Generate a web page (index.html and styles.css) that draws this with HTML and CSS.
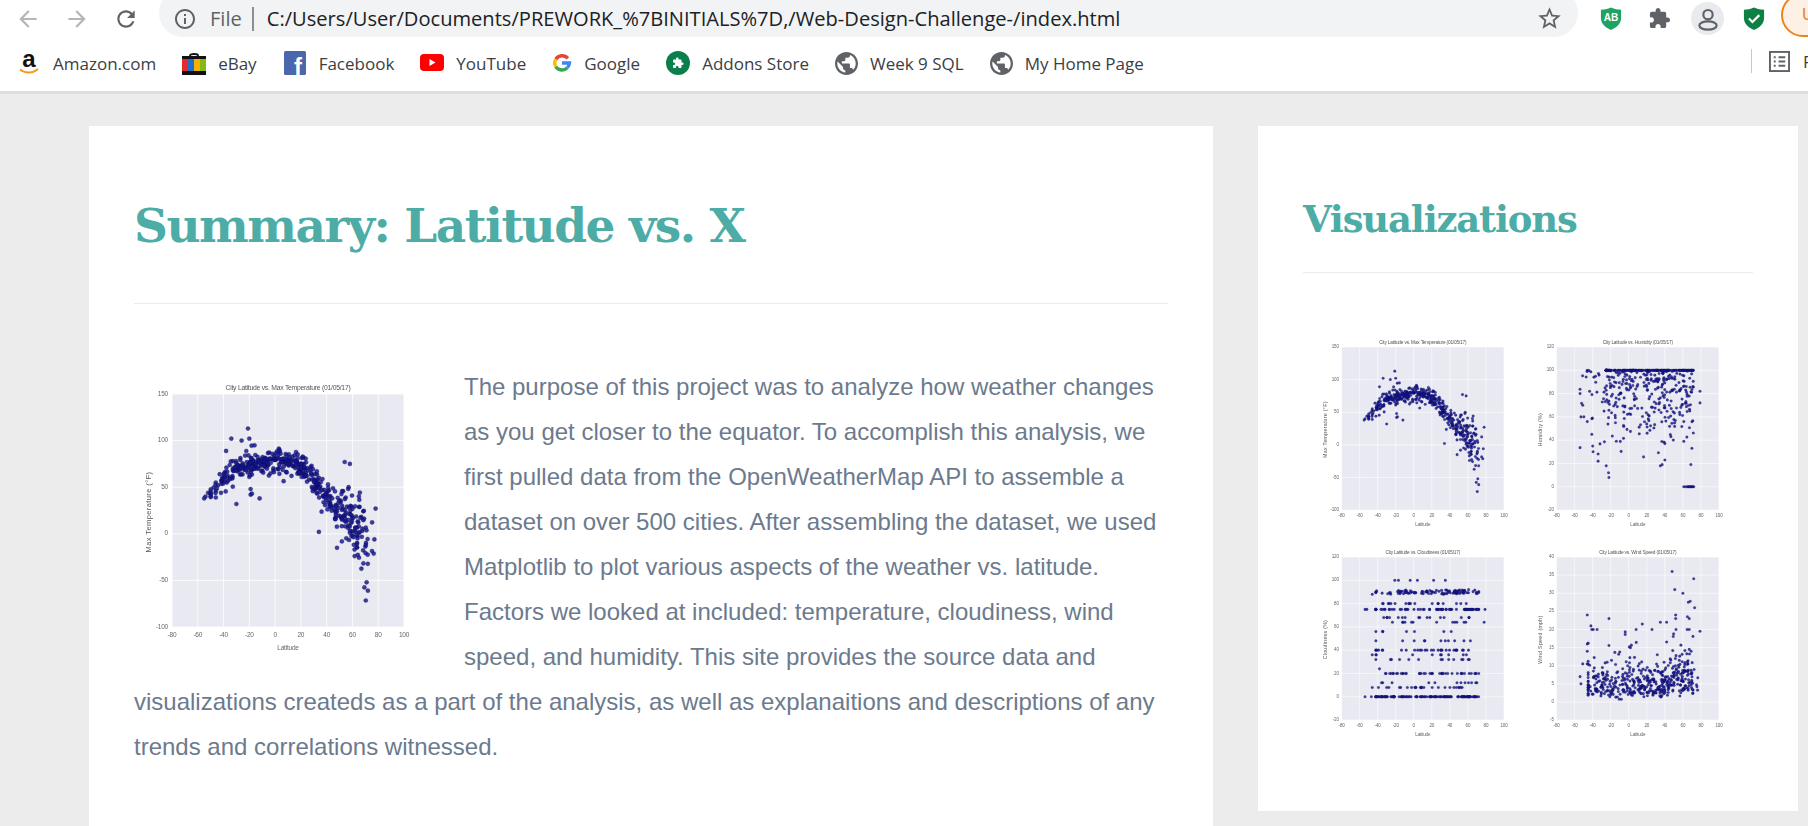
FILE: index.html
```html
<!DOCTYPE html>
<html lang="en">
<head>
<meta charset="utf-8">
<title>Summary: Latitude vs. X</title>
<link rel="stylesheet" href="styles.css">
</head>
<body>
<header class="chrome">
  <div class="toolbar">
    <svg class="nav nav-dim" viewBox="0 0 24 24"><path d="M20 11H7.83l5.59-5.59L12 4l-8 8 8 8 1.41-1.41L7.83 13H20v-2z"/></svg>
    <svg class="nav nav-dim" viewBox="0 0 24 24"><path d="M4 11h12.17l-5.59-5.59L12 4l8 8-8 8-1.41-1.41L16.17 13H4v-2z"/></svg>
    <svg class="nav" viewBox="0 0 24 24"><path d="M17.65 6.35C16.2 4.9 14.21 4 12 4c-4.42 0-7.99 3.58-7.99 8s3.57 8 7.99 8c3.73 0 6.84-2.55 7.73-6h-2.08c-.82 2.33-3.04 4-5.65 4-3.31 0-6-2.69-6-6s2.69-6 6-6c1.66 0 3.14.69 4.22 1.78L13 11h7V4l-2.35 2.35z"/></svg>
    <div class="omnibox">
      <svg class="info" viewBox="0 0 24 24"><path d="M11 7h2v2h-2zm0 4h2v6h-2zm1-9C6.48 2 2 6.48 2 12s4.48 10 10 10 10-4.48 10-10S17.52 2 12 2zm0 18c-4.41 0-8-3.59-8-8s3.59-8 8-8 8 3.59 8 8-3.59 8-8 8z"/></svg>
      <span class="scheme">File</span>
      <span class="url">C:/Users/User/Documents/PREWORK_%7BINITIALS%7D,/Web-Design-Challenge-/index.html</span>
      <svg class="star" viewBox="0 0 24 24"><path d="M22 9.24l-7.19-.62L12 2 9.19 8.63 2 9.24l5.46 4.73L5.82 21 12 17.27 18.18 21l-1.63-7.03L22 9.24zM12 15.4l-3.76 2.27 1-4.28-3.32-2.88 4.38-.38L12 6.1l1.71 4.04 4.38.38-3.32 2.88 1 4.28L12 15.4z"/></svg>
    </div>
    <div class="extensions">
      <svg class="ext" viewBox="0 0 24 26"><path fill="#1ea362" d="M12 1c4 2 7 2.4 11 2.400v9C23 18.500 18 23 12 25.500 6 23 1 18.500 1 12.400v-9C5 3.400 8 3 12 1z"/><text class="ab" x="12" y="15.500" text-anchor="middle">AB</text></svg>
      <svg class="ext puzzle" viewBox="0 0 24 24"><path d="M20.500 11H19V7c0-1.100-.9-2-2-2h-4V3.500C13 2.120 11.880 1 10.500 1S8 2.120 8 3.500V5H4c-1.100 0-1.990.9-1.990 2v3.800H3.500c1.490 0 2.700 1.210 2.700 2.700s-1.210 2.700-2.700 2.700H2V20c0 1.100.9 2 2 2h3.800v-1.500c0-1.490 1.210-2.700 2.700-2.700 1.490 0 2.700 1.210 2.700 2.700V22H17c1.100 0 2-.9 2-2v-4h1.500c1.380 0 2.500-1.120 2.500-2.500S21.880 11 20.500 11z"/></svg>
      <span class="avatar"><svg viewBox="0 0 24 24"><circle cx="12" cy="8" r="4.300"/><ellipse cx="12" cy="18" rx="8" ry="3.800"/></svg></span>
      <svg class="ext ext-safe" viewBox="0 0 24 26"><path fill="#0d8043" d="M12 1c4 2 7 2.400 11 2.400v9C23 18.500 18 23 12 25.500 6 23 1 18.500 1 12.400v-9C5 3.400 8 3 12 1z"/><path fill="none" stroke="#fff" stroke-width="2.400" d="M6.500 13l3.800 3.800 7.500-7.500"/></svg>
      <span class="update">U</span>
    </div>
  </div>
  <nav class="bookmarks">
    <a class="mark"><svg class="mark-icon" viewBox="0 0 24 24"><text class="amz" x="12" y="16" text-anchor="middle">a</text><path fill="none" stroke="#f59a1c" stroke-width="2" d="M3 18.500c5 4 13 4 18-.5"/></svg>Amazon.com</a>
    <a class="mark"><svg class="mark-icon" viewBox="0 0 24 24"><path fill="none" stroke="#111" stroke-width="1.800" d="M8 7V4.500C8 2.500 16 2.500 16 4.500V7"/><rect y="5" width="24" height="19" fill="#111"/><rect y="8" width="6" height="12" fill="#e52a2a"/><rect x="6" y="8" width="6" height="12" fill="#1e6fd0"/><rect x="12" y="8" width="6" height="12" fill="#f5b000"/><rect x="18" y="8" width="6" height="12" fill="#84b817"/></svg>eBay</a>
    <a class="mark"><svg class="mark-icon" viewBox="0 0 24 24"><rect x="1" width="22" height="24" rx="1.500" fill="#4a66ac"/><text class="fb" x="15" y="24" text-anchor="middle">f</text></svg>Facebook</a>
    <a class="mark"><svg class="mark-icon" viewBox="0 0 24 24"><rect y="3" width="24" height="17" rx="4" fill="#f00"/><path fill="#fff" d="M9.500 8v7l6-3.500z"/></svg>YouTube</a>
    <a class="mark"><svg class="mark-icon mark-g" viewBox="0 0 24 24"><g fill="none" stroke-width="4"><path stroke="#ea4335" d="M19 6.500A9 9 0 0 0 4.500 7.500"/><path stroke="#fbbc05" d="M4.500 7.500a9 9 0 0 0 0 9"/><path stroke="#34a853" d="M4.500 16.500a9 9 0 0 0 14 1"/><path stroke="#4285f4" d="M18.500 17.500A9 9 0 0 0 21 12H12"/></g></svg>Google</a>
    <a class="mark"><svg class="mark-icon" viewBox="0 0 24 24"><circle cx="12" cy="12" r="12" fill="#0b7f4b"/><path fill="#fff" transform="translate(6 6) scale(.5)" d="M20.500 11H19V7c0-1.100-.9-2-2-2h-4V3.500C13 2.120 11.880 1 10.500 1S8 2.120 8 3.500V5H4c-1.100 0-1.990.9-1.990 2v3.800H3.500c1.490 0 2.700 1.210 2.700 2.700s-1.210 2.700-2.700 2.700H2V20c0 1.100.9 2 2 2h3.800v-1.500c0-1.490 1.210-2.700 2.700-2.700 1.490 0 2.700 1.210 2.700 2.700V22H17c1.100 0 2-.9 2-2v-4h1.500c1.380 0 2.500-1.120 2.500-2.500S21.880 11 20.500 11z"/></svg>Addons Store</a>
    <a class="mark"><svg class="mark-icon globe" viewBox="2 2 20 20"><path d="M12 2C6.480 2 2 6.480 2 12s4.480 10 10 10 10-4.480 10-10S17.520 2 12 2zm-1 17.930c-3.950-.49-7-3.850-7-7.930 0-.62.08-1.210.21-1.790L9 15v1c0 1.100.9 2 2 2v1.930zm6.900-2.540c-.26-.81-1-1.390-1.900-1.390h-1v-3c0-.55-.45-1-1-1H8v-2h2c.55 0 1-.45 1-1V7h2c1.100 0 2-.9 2-2v-.41c2.930 1.190 5 4.060 5 7.410 0 2.080-.8 3.970-2.100 5.390z"/></svg>Week 9 SQL</a>
    <a class="mark"><svg class="mark-icon globe" viewBox="2 2 20 20"><path d="M12 2C6.480 2 2 6.480 2 12s4.480 10 10 10 10-4.480 10-10S17.520 2 12 2zm-1 17.930c-3.950-.49-7-3.850-7-7.930 0-.62.08-1.210.21-1.790L9 15v1c0 1.100.9 2 2 2v1.930zm6.900-2.540c-.26-.81-1-1.390-1.900-1.390h-1v-3c0-.55-.45-1-1-1H8v-2h2c.55 0 1-.45 1-1V7h2c1.100 0 2-.9 2-2v-.41c2.930 1.190 5 4.060 5 7.410 0 2.080-.8 3.970-2.100 5.390z"/></svg>My Home Page</a>
    <div class="reading">
      <svg class="list-icon" viewBox="0 0 22 22"><rect x="1" y="1" width="20" height="20" fill="none" stroke="#5f6368" stroke-width="2"/><path stroke="#5f6368" stroke-width="2" d="M5 6.500h2m3 0h7M5 11h2m3 0h7M5 15.500h2m3 0h7"/></svg>
      <span class="reading-label">Reading list</span>
    </div>
  </nav>
</header>
<div class="page">
  <main class="card card-main">
    <h1 class="title-main">Summary: Latitude vs. X</h1>
    <hr class="rule rule-main">
    <div class="article">
      <svg class="chart chart-large" data-kind="temp" viewBox="0 0 300 300"></svg>
      <p class="copy">The purpose of this project was to analyze how weather changes as you get closer to the equator. To accomplish this analysis, we first pulled data from the OpenWeatherMap API to assemble a dataset on over 500 cities. After assembling the dataset, we used Matplotlib to plot various aspects of the weather vs. latitude. Factors we looked at included: temperature, cloudiness, wind speed, and humidity. This site provides the source data and visualizations createds as a part of the analysis, as well as explanaitions and descriptions of any trends and correlations witnessed.</p>
    </div>
  </main>
  <aside class="card card-side">
    <h2 class="title-side">Visualizations</h2>
    <hr class="rule rule-side">
    <div class="gallery">
      <svg class="chart" data-kind="temp" viewBox="0 0 300 300"></svg>
      <svg class="chart" data-kind="humidity" viewBox="0 0 300 300"></svg>
      <svg class="chart" data-kind="cloud" viewBox="0 0 300 300"></svg>
      <svg class="chart" data-kind="wind" viewBox="0 0 300 300"></svg>
    </div>
  </aside>
</div>
<script src="chart.js"></script>
</body>
</html>
```
FILE: styles.css
```css
* { box-sizing: border-box; }
html, body { margin: 0; height: 826px; overflow: hidden; }
body { background: #ececec; font-family: "Liberation Sans", Arial, sans-serif; }

.chrome { background: #fff; height: 94px; border-bottom: 3px solid #dedede; overflow: hidden; }
.toolbar { height: 37px; display: flex; align-items: flex-end; position: relative; }
.nav { width: 26px; height: 26px; fill: #5f6368; margin: 0 0 5px 15px; flex: none; }
.nav:first-child { margin-left: 15px; }
.nav + .nav { margin-left: 23px; }
.nav-dim { fill: #b4b6b9; }
.omnibox { width: 1419px; height: 48px; margin-left: 20px; flex: none; border-radius: 24px; background: #f1f3f4; display: flex; align-items: center; padding: 11px 0 0 14px; color: #202124; font-family: "Open Sans", sans-serif; font-size: 20.100px; }
.info { width: 24px; height: 24px; fill: #5f6368; flex: none; }
.scheme { color: #5f6368; margin-left: 13px; padding-right: 10px; border-right: 2px solid #8d9093; line-height: 24px; }
.url { margin-left: 13px; white-space: nowrap; }
.star { width: 27px; height: 27px; fill: #5f6368; margin-left: auto; margin-right: 15px; flex: none; }
.extensions { display: flex; align-items: center; height: 37px; margin-left: 0; flex: none; }
.ext { width: 22px; height: 25px; flex: none; margin-left: 22px; }
.ext-safe { margin-left: 19px; }
.puzzle { fill: #5f6368; margin-left: 26px; width: 23px; }
.ab { font: bold 11px "Liberation Sans", sans-serif; fill: #fff; }
.avatar { width: 33px; height: 33px; border-radius: 50%; background: #e8eaed; margin-left: 20px; display: flex; align-items: center; justify-content: center; }
.avatar svg { width: 26px; height: 26px; fill: none; stroke: #5f6368; stroke-width: 2; }
.update { margin-left: 16px; width: 70px; height: 44px; margin-top: -8px; border: 2px solid #e8851c; background: #fdf1e6; border-radius: 22px; color: #e8851c; font-size: 17px; padding: 10px 0 0 19px; flex: none; }

.bookmarks { height: 54px; display: flex; align-items: center; padding: 0 0 2px 17px; gap: 26px; position: relative; font-family: "Open Sans", sans-serif; font-size: 17px; color: #3c4043; }
.mark { display: flex; align-items: center; gap: 12px; white-space: nowrap; }
.mark-icon { width: 24px; height: 24px; flex: none; overflow: visible; }
.mark-g { width: 20px; }
.globe { fill: #5f6368; width: 23px; height: 23px; }
.amz { font: bold 24px "Liberation Sans", sans-serif; fill: #111; }
.fb { font: bold 24px "Liberation Sans", sans-serif; fill: #fff; }
.reading { position: absolute; left: 1751px; top: 12px; height: 24px; display: flex; align-items: center; border-left: 1px solid #c8c8c8; padding-left: 17px; gap: 13px; white-space: nowrap; }
.list-icon { width: 21px; height: 21px; flex: none; }

.page { display: flex; gap: 45px; padding: 32px 10px 0 89px; align-items: flex-start; }
.card { background: #fff; padding: 0 45px; flex: none; }
.card-main { width: 1124px; height: 800px; }
.card-side { width: 540px; height: 685px; }
.title-main, .title-side { margin: 0; color: #4dacA6; font-family: "DejaVu Serif", "Liberation Serif", serif; font-weight: bold; }
.title-main { font-size: 47px; line-height: 60px; padding-top: 70px; letter-spacing: -1.500px; }
.title-side { font-size: 37px; line-height: 48px; padding-top: 69px; letter-spacing: -1.200px; }
.rule { margin: 0; border: 0; height: 1px; background: #ebebeb; }
.rule-main { margin-top: 47px; }
.rule-side { margin-top: 29px; }
.article { margin-top: 60px; }
.chart { display: block; filter: blur(.7px); }
.chart-large { float: left; width: 300px; height: 300px; margin-right: 30px; }
.copy { margin: 0; font-size: 24px; line-height: 45px; color: #6c7a8d; }
.gallery { display: grid; grid-template-columns: 210px 210px; column-gap: 5px; margin: 53px 0 0 12px; }
.gallery .chart { width: 210px; height: 210px; filter: blur(.6px); }

.plot { fill: #e9e9f2; }
.grid { stroke: #fff; stroke-width: .8; }
.tick { font: 6.500px "Liberation Sans", sans-serif; fill: #666; letter-spacing: -.2px; }
.chart-title { font: 6.800px "Liberation Sans", sans-serif; fill: #555; letter-spacing: -.25px; }
.axis-x { font: 6.500px "Liberation Sans", sans-serif; fill: #666; letter-spacing: -.2px; }
.axis-y { font: 7.500px "Liberation Sans", sans-serif; fill: #555; letter-spacing: .4px; }
.dot { fill: #15158e; fill-opacity: .82; stroke: #0a0a40; stroke-width: .25; }
```
FILE: chart.js
```js
// Seeded scatter plots, so the page draws the same figures on every load.
function rng(seed) {
  return function () {
    seed = (seed + 0x6d2b79f5) | 0;
    var t = Math.imul(seed ^ (seed >>> 15), 1 | seed);
    t = (t + Math.imul(t ^ (t >>> 7), 61 | t)) ^ t;
    return ((t ^ (t >>> 14)) >>> 0) / 4294967296;
  };
}
function gauss(r) {
  return Math.sqrt(-2 * Math.log(1 - r())) * Math.cos(2 * Math.PI * r());
}
function latitude(r) {
  var bins = [[-55, -40, 4], [-40, -20, 14], [-20, 0, 17], [0, 20, 18], [20, 40, 20], [40, 60, 20], [60, 72, 12], [72, 78, 1]];
  var p = r() * 106, i, acc = 0;
  for (i = 0; i < bins.length; i++) {
    acc += bins[i][2];
    if (p <= acc) return bins[i][0] + r() * (bins[i][1] - bins[i][0]);
  }
  return 30;
}
function interp(table, x) {
  for (var i = 1; i < table.length; i++) {
    if (x <= table[i][0]) {
      var a = table[i - 1], b = table[i];
      return a[1] + (b[1] - a[1]) * (x - a[0]) / (b[0] - a[0]);
    }
  }
  return table[table.length - 1][1];
}
var MEAN = [[-60, 35], [-50, 42], [-40, 60], [-30, 70], [-15, 76], [0, 78], [15, 78], [25, 66], [35, 48], [45, 30], [55, 18], [65, 4], [72, -14], [80, -20]];
var SPREAD = [[-60, 4], [-30, 7], [10, 6], [30, 7], [45, 8], [55, 14], [70, 19], [80, 20]];
var KINDS = {
  temp: {
    title: "City Latitude vs. Max Temperature (01/05/17)", ylabel: "Max Temperature (\u00b0F)",
    yticks: [-100, -50, 0, 50, 100, 150],
    extra: [[-21, 113], [-34, 102], [-26, 100], [-20, 102], [-38, 89], [-30, 32], [-12, 38], [-19, 42], [-18, 43], [-19, 48], [-16, 95], [54, 77], [58, 75], [57, 50], [78, 27], [77, -6], [72, -61], [71, -52], [-55, 38], [-54, 40], [-52, 44], [-46, 39], [-46, 46], [-46, 55], [-43, 64], [-42, 44], [34, 2], [48, -15]],
    make: function (r) {
      var x = Math.max(-50, latitude(r));
      return [x, interp(MEAN, x) + gauss(r) * interp(SPREAD, x)];
    }
  },
  humidity: {
    title: "City Latitude vs. Humidity (01/05/17)", ylabel: "Humidity (%)",
    yticks: [-20, 0, 20, 40, 60, 80, 100, 120],
    extra: [[-46, 100], [-54, 80], [-53, 60], [-51, 70], [-46, 56], [-22, 8], [-25, 18], [-34, 22], [79, 72], [79, 82], [61, 0], [63, 0], [65, 0], [66, 0], [67, 0], [68, 0], [69, 0], [70, 0], [71, 0], [72, 0], [-41, 45], [-40, 35], [35, 18], [37, 19], [40, 23], [61, 39], [70, 33]],
    make: function (r) {
      var x = latitude(r);
      if (x < -28 && r() < .5) x = r() * 90 - 20;
      if (r() < .3) return [Math.max(-25, x), 100];
      return [x, Math.max(12, 100 - Math.abs(gauss(r)) * 30)];
    }
  },
  cloud: {
    title: "City Latitude vs. Cloudiness (01/05/17)", ylabel: "Cloudiness (%)",
    yticks: [-20, 0, 20, 40, 60, 80, 100, 120],
    extra: [[-54, 75], [-52, 75], [-46, 88], [-21, 100], [-17, 100], [-4, 100], [4, 100], [22, 100], [35, 100], [-54, 0], [-47, 0], [78, 64], [79, 75], [-46, 36], [-42, 36], [-38, 24], [-46, 8], [-42, 75]],
    make: function (r) {
      var rows = [[0, 30], [90, 18], [75, 15], [40, 6], [20, 7], [8, 6], [80, 4], [56, 3], [48, 3], [32, 3], [68, 2], [64, 2], [36, 2], [12, 1]];
      var p = r() * 102, acc = 0, y = 0;
      for (var i = 0; i < rows.length; i++) {
        acc += rows[i][1];
        if (p <= acc) { y = rows[i][0]; break; }
      }
      var x = Math.max(-42, Math.min(72, latitude(r)));
      return [x, y === 90 ? y + (r() - .5) * 4 : y];
    }
  },
  wind: {
    title: "City Latitude vs. Wind Speed (01/05/17)", ylabel: "Wind Speed (mph)",
    yticks: [-5, 0, 5, 10, 15, 20, 25, 30, 35, 40],
    extra: [[48, 36], [72, 34], [51, 31], [60, 30], [66, 27.5], [68, 27.8], [73, 26], [-46, 24], [-22, 23], [15, 21.5], [35, 22], [42, 22], [52, 24], [52, 23], [65, 23.5], [67, 23], [-42, 21], [-41, 20], [79, 19.5], [-54, 7], [-53, 5], [-51, 10.5], [-46, 10.5], [-46, 14], [-46, 16]],
    make: function (r) {
      var x = Math.max(-45, latitude(r));
      var scale = x > 45 ? 1.85 : 1.65;
      return [x, Math.max(.5, Math.min(20, Math.exp(gauss(r) * .55 + scale)))];
    }
  }
};

var SEEDS = { temp: 11, humidity: 23, cloud: 37, wind: 53 };
var LEFT = 38, RIGHT = 270, TOP = 30, BOTTOM = 263;

function drawChart(svg) {
  var name = svg.getAttribute("data-kind");
  var kind = KINDS[name];
  var r = rng(SEEDS[name]);
  var ymin = kind.yticks[0], ymax = kind.yticks[kind.yticks.length - 1];
  var sx = function (v) { return LEFT + (v + 80) / 180 * (RIGHT - LEFT); };
  var sy = function (v) { return BOTTOM - (v - ymin) / (ymax - ymin) * (BOTTOM - TOP); };
  var parts = ['<rect class="plot" x="' + LEFT + '" y="' + TOP + '" width="' + (RIGHT - LEFT) + '" height="' + (BOTTOM - TOP) + '"/>'];
  for (var v = -80; v <= 100; v += 20) {
    parts.push('<line class="grid" x1="' + sx(v) + '" x2="' + sx(v) + '" y1="' + TOP + '" y2="' + BOTTOM + '"/>');
    parts.push('<text class="tick" text-anchor="middle" x="' + sx(v) + '" y="273">' + v + '</text>');
  }
  kind.yticks.forEach(function (t) {
    parts.push('<line class="grid" x1="' + LEFT + '" x2="' + RIGHT + '" y1="' + sy(t) + '" y2="' + sy(t) + '"/>');
    parts.push('<text class="tick" text-anchor="end" x="34" y="' + (sy(t) + 1.5) + '">' + t + '</text>');
  });
  parts.push('<text class="chart-title" text-anchor="middle" x="154" y="25.500">' + kind.title + '</text>');
  parts.push('<text class="axis-x" text-anchor="middle" x="154" y="285.500">Latitude</text>');
  parts.push('<text class="axis-y" text-anchor="middle" transform="translate(17 148) rotate(-90)">' + kind.ylabel + '</text>');
  var points = kind.extra.slice();
  for (var i = 0; i < 470; i++) points.push(kind.make(r));
  var radius = svg.classList.contains("chart-large") ? 2.1 : 1.9;
  points.forEach(function (p) {
    parts.push('<circle class="dot" r="' + radius + '" cx="' + sx(p[0]).toFixed(1) + '" cy="' + sy(p[1]).toFixed(1) + '"/>');
  });
  svg.innerHTML = parts.join("");
}
Array.prototype.forEach.call(document.querySelectorAll(".chart"), drawChart);
```
